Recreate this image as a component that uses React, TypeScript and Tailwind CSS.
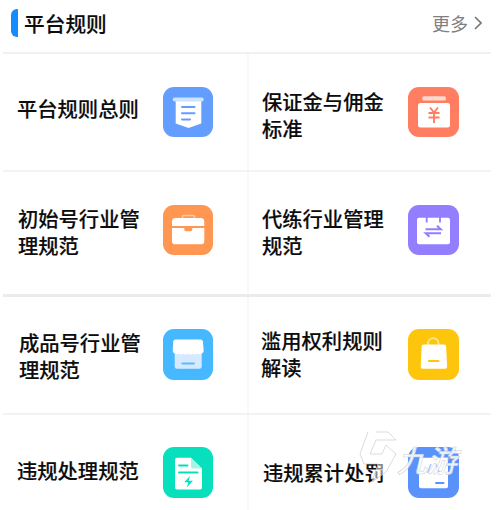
import React from 'react';

type Rule = {
  title: string[];
  tile: string;
  icon: React.ReactNode;
};

const rows: { height: string; cells: Rule[] }[] = [
  {
    height: 'h-[118px] border-b-2 border-[#f3f3f5]',
    cells: [
      {
        title: ['平台规则总则'],
        tile: 'bg-[#639dfe]',
        icon: (
          <>
            <path d="M12.7 12h25.6v24.5L25.5 41l-12.8-4.5z" fill="#fff" />
            <rect x="9.7" y="10.6" width="31" height="3.8" rx="1.9" fill="#cbe4ff" />
            <path d="M19 20h12.5M19 26.2h12.5M19 32.5h8" stroke="#639dfe" strokeWidth="2" strokeLinecap="round" />
          </>
        ),
      },
      {
        title: ['保证金与佣金', '标准'],
        tile: 'bg-[#ff7e61]',
        icon: (
          <>
            <rect x="14.3" y="9.3" width="23.6" height="4.2" rx="1.5" fill="#ffd9cf" />
            <rect x="10" y="16" width="32" height="24.5" rx="2.5" fill="#fff" />
            <path d="m22 20.5 4 5 4-5M20.5 26h11M20.5 30.5h11M26 25.5v10.5" fill="none" stroke="#ff7e61" strokeWidth="1.9" />
          </>
        ),
      },
    ],
  },
  {
    height: 'h-[125px] border-b-3 border-[#ebebeb]',
    cells: [
      {
        title: ['初始号行业管', '理规范'],
        tile: 'bg-[#ff9652]',
        icon: (
          <>
            <path d="M19.5 13.5v-2q0-1 1-1h10q1 0 1 1v2" fill="none" stroke="#ffc9a5" strokeWidth="1.6" />
            <path d="M12.5 13h25.3a3.5 3.5 0 0 1 3.5 3.5V21H9v-4.5a3.5 3.5 0 0 1 3.5-3.5z" fill="#fff" />
            <path d="M9 23h32.3v13.3a3 3 0 0 1-3 3H12a3 3 0 0 1-3-3z" fill="#fff" />
            <path d="M21.3 21h8v3.5a1.8 1.8 0 0 1-1.8 1.8h-4.4a1.8 1.8 0 0 1-1.8-1.8z" fill="#ff9652" />
          </>
        ),
      },
      {
        title: ['代练行业管理', '规范'],
        tile: 'bg-[#937eff]',
        icon: (
          <>
            <rect x="9" y="12.7" width="33" height="26.5" rx="2" fill="#fff" />
            <path d="M18.7 11v6.5M32 11v6.5" stroke="#937eff" strokeWidth="1.8" />
            <path d="M17.5 24.3h15.3L29 20.7M33 28.2H17.7l3.8 3.6" fill="none" stroke="#937eff" strokeWidth="2" />
          </>
        ),
      },
    ],
  },
  {
    height: 'h-[118px] border-b-2 border-[#f1f1f6]',
    cells: [
      {
        title: ['成品号行业管', '理规范'],
        tile: 'bg-[#45b8ff]',
        icon: (
          <>
            <path d="M11.7 21h27v16.5a2.3 2.3 0 0 1-2.3 2.3H14a2.3 2.3 0 0 1-2.3-2.3z" fill="#d6eaff" />
            <path d="M12.5 10.5h25a2.5 2.5 0 0 1 2.4 2l.8 9.5a4 4 0 0 1-6 2.6q-2.3 2-4.7 0-2.4 2-4.8 0-2.4 2-4.8 0-2.4 2-4.7 0a4 4 0 0 1-6-2.6l.5-9.5a2.5 2.5 0 0 1 2.3-2z" fill="#fff" />
            <path d="M19.3 34.5h11.5" stroke="#5bbcff" strokeWidth="2" strokeLinecap="round" />
          </>
        ),
      },
      {
        title: ['滥用权利规则', '解读'],
        tile: 'bg-[#fdc60d]',
        icon: (
          <>
            <path d="M20 17v-2.5a5.3 5.3 0 0 1 10.6 0V17" fill="none" stroke="#ffe795" strokeWidth="1.7" />
            <path d="M15.5 15.5h20.8q1.7 0 1.8 1.7l1 20.5q0 2-2 2H14.7q-2 0-2-2l1-20.5q.1-1.7 1.8-1.7z" fill="#fff" />
            <path d="M21 32h9.5" stroke="#fdc60d" strokeWidth="2.2" strokeLinecap="round" />
          </>
        ),
      },
    ],
  },
  {
    height: 'h-[117px]',
    cells: [
      {
        title: ['违规处理规范'],
        tile: 'bg-[#07dfbd]',
        icon: (
          <>
            <path d="M14 10.7h14L39 21.5v19a2 2 0 0 1-2 2H14a2 2 0 0 1-2-2V12.7a2 2 0 0 1 2-2z" fill="#fff" />
            <path d="M28 10.7 39 21.5h-9a2 2 0 0 1-2-2z" fill="#a8f3e4" />
            <path d="M16 18.5h8.5M16 25.5h18.5" stroke="#07dfbd" strokeWidth="2" strokeLinecap="round" />
            <path d="m27 29-5.8 6.3h4L24 40.2l5.9-6.4h-4.3z" fill="#07dfbd" />
          </>
        ),
      },
      {
        title: ['违规累计处罚'],
        tile: 'bg-[#5a92fc]',
        icon: (
          <>
            <rect x="11" y="10.7" width="29" height="30.5" rx="2" fill="#fff" />
            <path d="m23 17-3.5 9M28 17l3.5 9" stroke="#a9c8ff" strokeWidth="1.6" />
            <path d="M28 36h7.5" stroke="#5a92fc" strokeWidth="2" strokeLinecap="round" />
          </>
        ),
      },
    ],
  },
];

// per-row / per-column offsets of the label
const labelPad = [
  ['pl-[14px] pt-[41px]', 'pl-[13px] pt-[34px]'],
  ['pl-[15px] pt-[33px]', 'pl-[13px] pt-[33px]'],
  ['pl-[16px] pt-[32px]', 'pl-[12px] pt-[30px]'],
  ['pl-[14px] pt-[42px]', 'pl-[14px] pt-[44px]'],
];
const tilePad = ['pt-[33px]', 'pt-[33px]', 'pt-[32px]', 'pt-[32px]'];
const tileSize = ['h-[50px]', 'h-[50px]', 'h-[51px]', 'h-[51px]'];

function RuleCell({ rule, row, col }: { rule: Rule; row: number; col: number }) {
  return (
    <div className={`flex justify-between ${col === 0 ? 'w-[246px] border-r-2 border-[#f8f8fa] pr-[34px]' : 'w-[242px] pr-[32px]'}`}>
      <div
        className={`whitespace-nowrap text-[20.3px] leading-[27px] font-medium text-[#0c0c0c] [-webkit-text-stroke:0.15px_#0c0c0c] ${labelPad[row][col]}`}
      >
        {rule.title.map((line) => (
          <div key={line}>{line}</div>
        ))}
      </div>
      <div className={`shrink-0 ${tilePad[row]}`}>
        <div className={`${col === 0 ? 'w-[50px]' : 'w-[51px]'} rounded-[11px] ${tileSize[row]} ${rule.tile}`}>
          <svg viewBox="0 0 50 50" className="size-[50px]">{rule.icon}</svg>
        </div>
      </div>
    </div>
  );
}

function Watermark() {
  return (
    <svg viewBox="358 429 110 56" className="absolute top-[429px] left-[358px] h-[56px] w-[110px]">
      <path
        d="M368 432l-8 22 4 10h14l-6 18 14-10 10-18-10-9-4 9h-12l6-14h20l-8-8h-12"
        fill="#fff"
        fillOpacity="0.5"
        stroke="#cdcdcd"
        strokeWidth="0.7"
      />
      <text
        x="0"
        y="0"
        fontSize="30"
        fontWeight="500"
        fill="#fff"
        fillOpacity="0.9"
        stroke="#c9ccd4"
        strokeWidth="0.5"
        transform="translate(397 472) skewX(-14)"
      >
        九游
      </text>
    </svg>
  );
}

export default function App() {
  return (
    <div className="relative h-[510px] w-[500px] overflow-hidden bg-white font-['Noto_Sans_CJK_SC',sans-serif]">
      <div className="ml-[3px] w-[488px]">
        <header className="flex h-[54px] items-start justify-between border-b-2 border-[#f0f0f0] pr-[9px] pl-2">
          <div className="flex items-center pt-[9px]">
            <span className="h-[28px] w-[7px] rounded-l-[6px] bg-[#148cff]" />
            <h1 className="-mt-px ml-[6px] text-[20.7px] leading-[28px] font-medium text-[#0c0c0c] [-webkit-text-stroke:0.15px_#0c0c0c]">
              平台规则
            </h1>
          </div>
          <a className="flex items-center pt-[10px] text-[18px] leading-[26px] text-[#808080]">
            更多
            <svg viewBox="0 0 8 14" className="ml-[6px] h-[14px] w-[8px]">
              <path d="m1 1 6 6-6 6" fill="none" stroke="#777" strokeWidth="1.6" />
            </svg>
          </a>
        </header>

        {rows.map((row, r) => (
          <section key={r} className={`flex ${row.height}`}>
            {row.cells.map((rule, c) => (
              <RuleCell key={c} rule={rule} row={r} col={c} />
            ))}
          </section>
        ))}
      </div>
      <Watermark />
    </div>
  );
}
